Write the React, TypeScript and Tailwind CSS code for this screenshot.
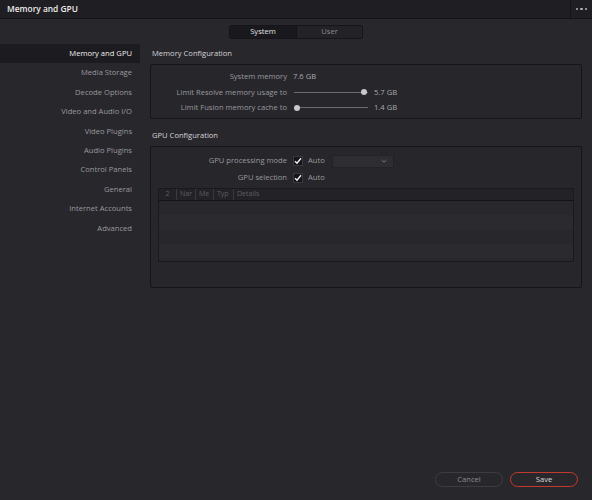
import React from "react";

const font = { fontFamily: '"Open Sans", "Noto Sans", sans-serif' };

const sideItems = [
  "Memory and GPU",
  "Media Storage",
  "Decode Options",
  "Video and Audio I/O",
  "Video Plugins",
  "Audio Plugins",
  "Control Panels",
  "General",
  "Internet Accounts",
  "Advanced",
];

function Slider({ pos }: { pos: number }) {
  return (
    <div className="relative w-[74px] h-[8px] flex items-center">
      <div className="w-full h-[1px] bg-[#6a6a70]" />
      <div
        className="absolute top-[1px] w-[6px] h-[6px] rounded-full bg-[#c9c9cc]"
        style={{ left: `${pos}px` }}
      />
    </div>
  );
}

function Check() {
  return (
    <div className="w-[10px] h-[10px] bg-[#161519] border border-[#3a393e] flex items-center justify-center">
      <svg width="8" height="8" viewBox="0 0 8 8">
        <path d="M1 4.2 L3 6.3 L7 1.2" stroke="#f2f2f2" strokeWidth="1.4" fill="none" />
      </svg>
    </div>
  );
}

export default function App() {
  return (
    <div
      className="w-[592px] h-[500px] bg-[#28272c] flex flex-col overflow-hidden text-[7.6px]"
      style={font}
    >
      {/* Header */}
      <div className="h-[19px] bg-[#1f1e23] border-b border-[#141316] flex items-center shrink-0">
        <div className="flex-1 pl-[7px] text-[8.4px] font-semibold text-[#ececec]">Memory and GPU</div>
        <div className="w-[22px] h-full border-l border-[#141316] flex items-center justify-center gap-[2px]">
          <span className="w-[2.5px] h-[2.5px] rounded-full bg-[#b5b5b8]" />
          <span className="w-[2.5px] h-[2.5px] rounded-full bg-[#b5b5b8]" />
          <span className="w-[2.5px] h-[2.5px] rounded-full bg-[#b5b5b8]" />
        </div>
      </div>

      {/* Tabs */}
      <div className="flex justify-center pt-[6px] shrink-0">
        <div className="flex h-[14px] rounded-[2px] overflow-hidden border border-[#151418]">
          <div className="w-[66px] bg-[#19181c] text-[#e2e2e4] flex items-center justify-center">System</div>
          <div className="w-[66px] bg-[#232227] border-l border-[#151418] text-[#8d8d92] flex items-center justify-center">User</div>
        </div>
      </div>

      <div className="flex flex-1 pt-[5px]">
        {/* Sidebar */}
        <div className="w-[140px] flex flex-col shrink-0">
          {sideItems.map((s, i) => (
            <div
              key={s}
              className={
                "h-[19.4px] flex items-center justify-end pr-[8px] " +
                (i === 0 ? "bg-[#1c1b1f] text-[#f0f0f2]" : "text-[#9a9a9f]")
              }
            >
              {s}
            </div>
          ))}
        </div>

        {/* Content */}
        <div className="flex-1 flex flex-col pl-[10px] pr-[10px]">
          <div className="h-[20px] flex items-center pl-[2px] text-[#d4d4d7]">Memory Configuration</div>
          <div className="h-[55px] border border-[#151418] rounded-[2px] bg-[#27262b] pt-[4px] flex flex-col">
            <div className="h-[15.5px] flex items-center">
              <div className="w-[136px] text-right text-[#9a9a9f]">System memory</div>
              <div className="pl-[6px] text-[#a9a9ad]">7.6 GB</div>
            </div>
            <div className="h-[15.5px] flex items-center">
              <div className="w-[136px] text-right text-[#9a9a9f]">Limit Resolve memory usage to</div>
              <div className="pl-[7px]"><Slider pos={67} /></div>
              <div className="pl-[6px] text-[#a9a9ad]">5.7 GB</div>
            </div>
            <div className="h-[15.5px] flex items-center">
              <div className="w-[136px] text-right text-[#9a9a9f]">Limit Fusion memory cache to</div>
              <div className="pl-[7px]"><Slider pos={0} /></div>
              <div className="pl-[6px] text-[#a9a9ad]">1.4 GB</div>
            </div>
          </div>

          <div className="h-[20px] mt-[7px] flex items-center pl-[2px] text-[#d4d4d7]">GPU Configuration</div>
          <div className="h-[142px] border border-[#151418] rounded-[2px] bg-[#27262b] pt-[6px] flex flex-col">
            <div className="h-[16px] flex items-center">
              <div className="w-[136px] text-right text-[#9a9a9f]">GPU processing mode</div>
              <div className="pl-[6px]"><Check /></div>
              <div className="pl-[5px] text-[#9a9a9f] w-[29px]">Auto</div>
              <div className="w-[62px] h-[13px] bg-[#2e2d32] border border-[#232227] rounded-[2px] flex items-center justify-end pr-[6px]">
                <svg width="6" height="4" viewBox="0 0 6 4">
                  <path d="M0.5 0.8 L3 3.2 L5.5 0.8" stroke="#7a7a7f" strokeWidth="0.9" fill="none" />
                </svg>
              </div>
            </div>
            <div className="h-[16px] flex items-center mt-[1px]">
              <div className="w-[136px] text-right text-[#9a9a9f]">GPU selection</div>
              <div className="pl-[6px]"><Check /></div>
              <div className="pl-[5px] text-[#9a9a9f]">Auto</div>
            </div>

            <div className="mx-[7px] mt-[2px] h-[74px] border border-[#1a191d] flex flex-col text-[7px] text-[#5e5e63]">
              <div className="h-[12px] bg-[#232227] border-b border-[#141316] flex items-center shrink-0">
                <div className="w-[18px] text-center border-r border-[#3a393e]">2</div>
                <div className="w-[19px] pl-[3px] border-r border-[#3a393e] overflow-hidden whitespace-nowrap">Nar</div>
                <div className="w-[18px] pl-[3px] border-r border-[#3a393e] overflow-hidden whitespace-nowrap">Me</div>
                <div className="w-[20px] pl-[3px] border-r border-[#3a393e] overflow-hidden whitespace-nowrap">Typ</div>
                <div className="pl-[3px]">Details</div>
              </div>
              <div className="h-[14.3px] bg-[#28272c]" />
              <div className="h-[14.3px] bg-[#2b2a2f]" />
              <div className="h-[14.3px] bg-[#28272c]" />
              <div className="h-[14.3px] bg-[#2b2a2f]" />
              <div className="flex-1 bg-[#28272c]" />
            </div>
          </div>

          <div className="flex-1" />
          <div className="flex justify-end gap-[7px] pb-[13px] pr-[4px]">
            <div className="w-[68px] h-[15px] rounded-full border border-[#3d3c42] flex items-center justify-center text-[#8d8d92]">Cancel</div>
            <div className="w-[68px] h-[15px] rounded-full border border-[#c23a32] flex items-center justify-center text-[#d8d8da]">Save</div>
          </div>
        </div>
      </div>
    </div>
  );
}
